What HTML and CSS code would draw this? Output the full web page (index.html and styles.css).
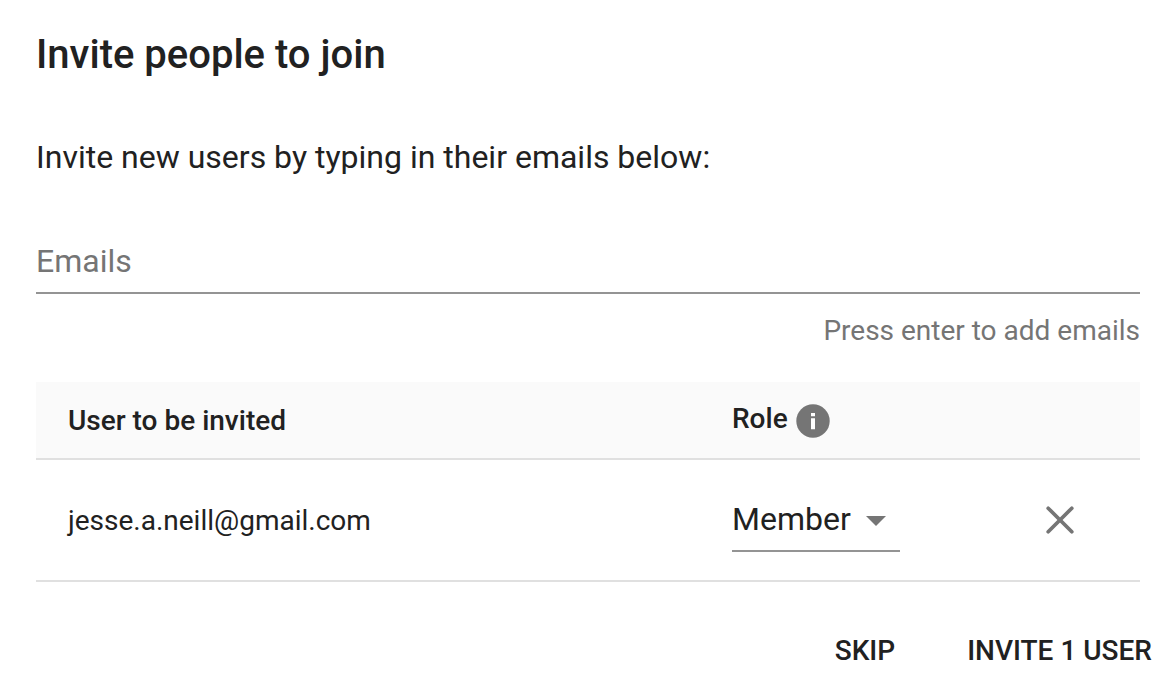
FILE: index.html
```html
<!DOCTYPE html>
<html lang="en">
<head>
<meta charset="utf-8">
<title>Invite people to join</title>
<link rel="stylesheet" href="styles.css">
</head>
<body>
<main class="dialog">
  <h1 class="title">Invite people to join</h1>
  <p class="intro">Invite new users by typing in their emails below:</p>
  <form class="form">
    <input class="emails" type="text" id="emails" placeholder="Emails" aria-label="Emails" aria-describedby="hint">
    <p class="hint" id="hint">Press enter to add emails</p>
    <table class="users">
      <colgroup><col class="col-user"><col class="col-role"><col class="col-remove"></colgroup>
      <thead>
        <tr>
          <th scope="col">User to be invited</th>
          <th scope="col" colspan="2">Role<svg class="info" viewBox="0 0 34 34" aria-hidden="true"><circle cx="17" cy="17" r="16.7" fill="#757575"/><path d="M15 9h4v3.300h-4zM15 14.200h4v11h-4z" fill="#fff"/></svg></th>
        </tr>
      </thead>
      <tbody>
        <tr>
          <td>jesse.a.neill@gmail.com</td>
          <td>
            <span class="select-wrap">
              <select class="role" aria-label="Role"><option>Member</option><option>Admin</option></select>
              <svg class="arrow" viewBox="0 0 20 10" aria-hidden="true"><path d="M0 0h20L10 10z" fill="#757575"/></svg>
            </span>
          </td>
          <td>
            <button class="remove" type="button" aria-label="Remove user"><svg viewBox="0 0 28 28" aria-hidden="true"><path d="M2.200 2.200l23.600 23.600M25.800 2.200L2.200 25.800" fill="none" stroke="#757575" stroke-width="3.700" stroke-linecap="round"/></svg></button>
          </td>
        </tr>
      </tbody>
    </table>
    <div class="actions">
      <button class="action" type="button">SKIP</button>
      <button class="action" type="button">INVITE 1 USER</button>
    </div>
  </form>
</main>
</body>
</html>
```
FILE: styles.css
```css
* { box-sizing: border-box; }
body { margin: 0; background: #fff; color: #212121; font-family: Roboto, "Liberation Sans", sans-serif; }
.dialog { padding: 32px 30px 0 36px; }
.title { margin: 0; font-size: 40px; line-height: 46px; font-weight: 500; }
.intro { margin: 60px 0 0; font-size: 32px; line-height: 38px; }
.emails { display: block; width: 100%; height: 64px; margin-top: 54px; padding: 0; border: 0; border-bottom: 2px solid #949494; outline: 0; background: none; color: #212121; font-family: inherit; font-size: 32px; }
.emails::placeholder { color: #757575; opacity: 1; }
.hint { margin: 20px 0 0; color: #757575; font-size: 28px; line-height: 34px; text-align: right; }
.users { width: 100%; margin-top: 34px; border-collapse: separate; border-spacing: 0; table-layout: fixed; font-size: 28px; text-align: left; }
.col-role { width: 314px; }
.col-remove { width: 126px; }
.users th { height: 78px; padding: 0 0 0 32px; background: #fafafa; border-bottom: 2px solid #e0e0e0; font-weight: 500; }
.users td { height: 122px; padding: 0 0 0 32px; border-bottom: 2px solid #e0e0e0; }
.info { width: 34px; height: 34px; margin-left: 8px; vertical-align: middle; }
.select-wrap { position: relative; display: block; width: 168px; }
.role { display: block; width: 100%; height: 64px; padding: 0; border: 0; border-bottom: 2px solid #949494; outline: 0; appearance: none; background: none; color: #212121; font-family: inherit; font-size: 32px; }
.arrow { position: absolute; right: 14px; top: 28px; width: 20px; height: 10px; pointer-events: none; }
.remove { display: block; padding: 0; border: 0; background: none; }
.remove svg { display: block; width: 28px; height: 28px; }
.actions { display: flex; justify-content: flex-end; gap: 64px; margin: 48px -16px 0 0; }
.action { padding: 0 4px; border: 0; background: none; color: #212121; font-family: inherit; font-size: 28px; line-height: 42px; font-weight: 500; }
```
